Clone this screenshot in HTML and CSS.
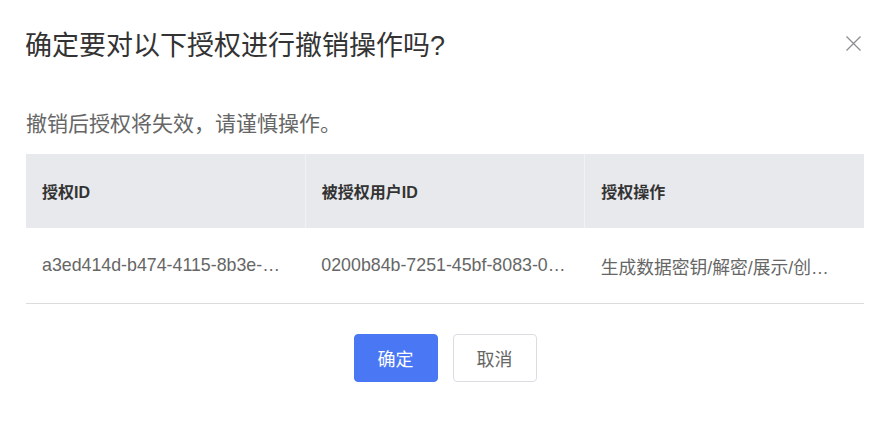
FILE: index.html
```html
<!doctype html>
<html>
<head>
<meta charset="utf-8">
<title>撤销授权</title>
<link rel="stylesheet" href="styles.css">
</head>
<body>
	<div class="dialog">
		<div class="dialog-head">
			<h1 class="dialog-title">确定要对以下授权进行撤销操作吗?</h1>
			<span class="dialog-close">
				<svg width="15" height="15" viewBox="0 0 15 15">
					<path d="M0.5 0.5 L14.5 14.5 M14.5 0.5 L0.5 14.5" stroke="#8c8d93" stroke-width="1.3" fill="none"/>
				</svg>
			</span>
		</div>
		<p class="dialog-tip">撤销后授权将失效，请谨慎操作。</p>
		<table class="grant-table">
			<thead>
				<tr>
					<th>授权ID</th>
					<th>被授权用户ID</th>
					<th>授权操作</th>
				</tr>
			</thead>
			<tbody>
				<tr>
					<td>a3ed414d-b474-4115-8b3e-…</td>
					<td>0200b84b-7251-45bf-8083-0…</td>
					<td>生成数据密钥/解密/展示/创…</td>
				</tr>
			</tbody>
		</table>
		<div class="dialog-foot">
			<button class="btn btn-primary">确定</button>
			<button class="btn">取消</button>
		</div>
	</div>
</body>
</html>
```

FILE: styles.css
```css
body {
	margin: 0;
	background: #fff;
	font-family: "Liberation Sans", "Noto Sans CJK SC", sans-serif;
	color: #333;
}

.dialog {
	padding: 0 31px 0 26px;
}

.dialog-head {
	display: flex;
	justify-content: space-between;
	align-items: flex-start;
	padding-top: 30px;
}

.dialog-title {
	margin: 0 0 0 -1px;
	font-size: 27px;
	line-height: 33px;
	font-weight: normal;
	color: #333;
}

.dialog-close {
	display: block;
	margin-top: 6px;
	margin-right: 3px;
	width: 15px;
	height: 15px;
}

.dialog-close svg {
	display: block;
}

.dialog-tip {
	margin: 46px 0 15px 0;
	font-size: 21px;
	line-height: 30px;
	color: #666;
}

.grant-table {
	width: 100%;
	border-collapse: collapse;
	table-layout: fixed;
}

.grant-table th {
	height: 74px;
	padding: 0 16px;
	background: #e8e9ed;
	text-align: left;
	font-size: 16px;
	font-weight: bold;
	color: #333;
	border-left: 1px solid #f1f2f5;
}

.grant-table th:first-child {
	border-left: none;
}

.grant-table td {
	height: 75px;
	padding: 0 6px 0 16px;
	font-size: 17.8px;
	color: #666;
	border-bottom: 1px solid #dcdcdc;
	white-space: nowrap;
	overflow: hidden;
}

.dialog-foot {
	display: flex;
	justify-content: center;
	gap: 15px;
	margin-top: 30px;
}

.btn {
	width: 84px;
	height: 48px;
	border: 1px solid #dcdde3;
	border-radius: 4px;
	background: #fff;
	font-family: "Liberation Sans", "Noto Sans CJK SC", sans-serif;
	font-size: 18px;
	color: #666;
	padding: 0;
}

.btn-primary {
	background: #4a78f5;
	border-color: #4a78f5;
	color: #fff;
}
```
